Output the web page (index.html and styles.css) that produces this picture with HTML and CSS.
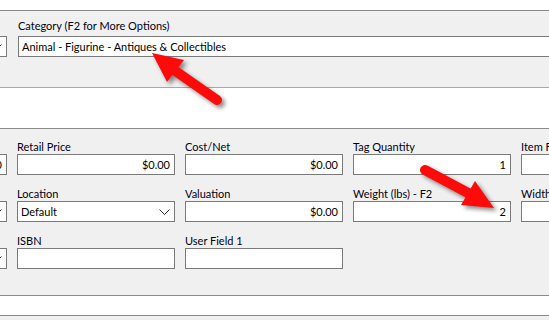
FILE: index.html
```html
<!DOCTYPE html>
<html lang="en">
<head>
    <meta charset="UTF-8">
    <title>Item Details</title>
    <link rel="stylesheet" href="styles.css">
</head>
<body>

    <div class="top-strip"></div>

    <!-- Category panel -->
    <div class="panel cat-panel">
        <div class="grid cat-grid">
            <div class="field">
                <div class="label"></div>
                <div class="box select"><span></span><svg class="chev" width="11" height="6" viewBox="0 0 11 6"><polyline points="0.5,0.5 5.5,5.5 10.5,0.5"/></svg></div>
            </div>
            <div class="field">
                <div class="label">Category (F2 for More Options)</div>
                <div class="box">Animal - Figurine - Antiques &amp; Collectibles</div>
            </div>
        </div>
    </div>

    <div class="white-gap"></div>

    <!-- Pricing panel -->
    <div class="panel main-panel">
        <div class="grid">
            <div class="field">
                <div class="label"></div>
                <div class="box num">$0.00</div>
            </div>
            <div class="field">
                <div class="label">Retail Price</div>
                <div class="box num">$0.00</div>
            </div>
            <div class="field">
                <div class="label">Cost/Net</div>
                <div class="box num">$0.00</div>
            </div>
            <div class="field">
                <div class="label">Tag Quantity</div>
                <div class="box num">1</div>
            </div>
            <div class="field">
                <div class="label">Item Fee</div>
                <div class="box num"></div>
            </div>

            <div class="field">
                <div class="label"></div>
                <div class="box select"><span></span><svg class="chev" width="11" height="6" viewBox="0 0 11 6"><polyline points="0.5,0.5 5.5,5.5 10.5,0.5"/></svg></div>
            </div>
            <div class="field">
                <div class="label">Location</div>
                <div class="box select"><span>Default</span><svg class="chev" width="11" height="6" viewBox="0 0 11 6"><polyline points="0.5,0.5 5.5,5.5 10.5,0.5"/></svg></div>
            </div>
            <div class="field">
                <div class="label">Valuation</div>
                <div class="box num">$0.00</div>
            </div>
            <div class="field">
                <div class="label">Weight (lbs) - F2</div>
                <div class="box num">2</div>
            </div>
            <div class="field">
                <div class="label">Width</div>
                <div class="box num"></div>
            </div>

            <div class="field">
                <div class="label"></div>
                <div class="box select"><span></span><svg class="chev" width="11" height="6" viewBox="0 0 11 6"><polyline points="0.5,0.5 5.5,5.5 10.5,0.5"/></svg></div>
            </div>
            <div class="field">
                <div class="label">ISBN</div>
                <div class="box"></div>
            </div>
            <div class="field">
                <div class="label">User Field 1</div>
                <div class="box"></div>
            </div>
        </div>
    </div>

    <div class="white-bar"></div>
    <div class="panel bottom-panel"></div>

    <!-- Red callout arrows -->
    <svg class="arrows" width="549" height="320" viewBox="0 0 549 320">
        <g class="arrow">
            <line x1="217" y1="100" x2="174" y2="70"/>
            <polygon points="152,53 184,60 167,82"/>
        </g>
        <g class="arrow">
            <line x1="425" y1="170" x2="470" y2="194"/>
            <polygon points="494,208 475,181 461,205"/>
        </g>
    </svg>

</body>
</html>
```

FILE: styles.css
```css
/* Page */
body {
    margin: 0;
    width: 549px;
    height: 320px;
    overflow: hidden;
    position: relative;
    background: #ffffff;
    font-family: "Lato", "Noto Sans", sans-serif;
    font-size: 11px;
    color: #000014;
}

.top-strip {
    height: 10px;
    background: #ffffff;
}

/* Gray panels */
.panel {
    background: #f0f0f0;
    border-top: 1px solid #8a8a8a;
    border-bottom: 1px solid #8a8a8a;
}

.cat-panel {
    height: 78px;
    padding-top: 7px;
    box-sizing: border-box;
    border-bottom-color: #a8a8a8;
}

.white-gap {
    height: 40px;
    background: #ffffff;
}

.main-panel {
    height: 168px;
    padding-top: 10px;
    box-sizing: border-box;
}

.white-bar {
    height: 19px;
    background: #ffffff;
}

.bottom-panel {
    height: 10px;
    border-bottom: none;
}

/* Field grid */
.grid {
    display: grid;
    grid-template-columns: repeat(5, 158px);
    column-gap: 10px;
    row-gap: 11px;
    margin-left: -151px;
    width: 900px;
}

.cat-grid {
    grid-template-columns: 158px 600px;
    column-gap: 11px;
}

.field {
    display: flex;
    flex-direction: column;
}

.label {
    height: 15px;
    line-height: 15px;
    white-space: nowrap;
}

.cat-grid .label {
    height: 18px;
}

.box {
    height: 21px;
    box-sizing: border-box;
    border: 1px solid #7a7a7a;
    background: #ffffff;
    padding: 0 4px 0 3px;
    line-height: 19px;
    white-space: nowrap;
    color: #000000;
}

.num {
    text-align: right;
}

.select {
    display: flex;
    align-items: center;
    justify-content: space-between;
}

.chev {
    fill: none;
    stroke: #333333;
    stroke-width: 1;
}

/* Callout arrows */
.arrows {
    position: absolute;
    top: 0;
    left: 0;
    pointer-events: none;
}

.arrow {
    filter: drop-shadow(3px 3px 2px rgba(0, 0, 0, 0.45));
}

.arrow line {
    stroke: #ff0a0a;
    stroke-width: 10;
    stroke-linecap: round;
}

.arrow polygon {
    fill: #ff0a0a;
}
```
